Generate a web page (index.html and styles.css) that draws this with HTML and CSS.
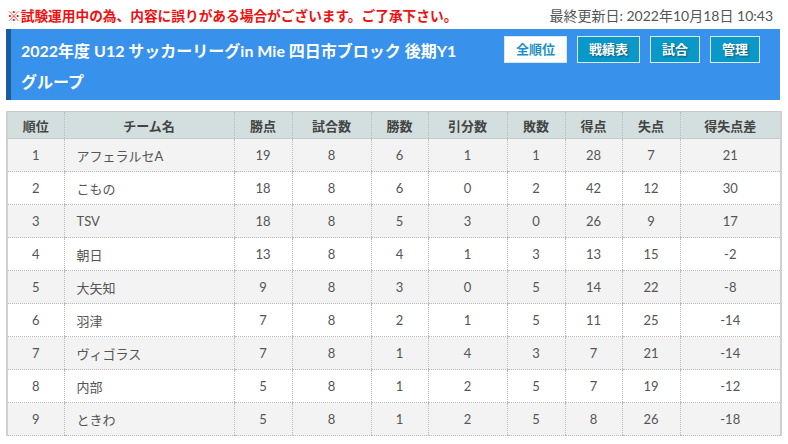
FILE: index.html
```html
<!DOCTYPE html>
<html lang="ja">
<head>
  <meta charset="UTF-8">
  <meta name="viewport" content="width=device-width, initial-scale=1.0">
  <title>順位表</title>
  <link rel="stylesheet" href="styles.css">
</head>
<body>
  <div class="page">
    <div class="topline">
      <span class="notice">※試験運用中の為、内容に誤りがある場合がございます。ご了承下さい。</span>
      <span class="updated">最終更新日: 2022年10月18日 10:43</span>
    </div>

    <div class="league-head">
      <h2 class="league-title">2022年度 U12 サッカーリーグin Mie 四日市ブロック 後期Y1<span class="nowrap">グループ</span></h2>
      <div class="menu">
        <a class="menu-btn active" href="#">全順位</a>
        <a class="menu-btn" href="#">戦績表</a>
        <a class="menu-btn" href="#">試合</a>
        <a class="menu-btn" href="#">管理</a>
      </div>
    </div>

    <table class="standings">
      <colgroup>
        <col style="width:57px">
        <col style="width:170px">
        <col style="width:58px">
        <col style="width:79px">
        <col style="width:57px">
        <col style="width:79px">
        <col style="width:58px">
        <col style="width:57px">
        <col style="width:58px">
        <col style="width:101px">
      </colgroup>
      <tr><th>順位</th><th>チーム名</th><th>勝点</th><th>試合数</th><th>勝数</th><th>引分数</th><th>敗数</th><th>得点</th><th>失点</th><th>得失点差</th></tr>
      <tr><td>1</td><td class="team">アフェラルセA</td><td>19</td><td>8</td><td>6</td><td>1</td><td>1</td><td>28</td><td>7</td><td>21</td></tr>
      <tr><td>2</td><td class="team">こもの</td><td>18</td><td>8</td><td>6</td><td>0</td><td>2</td><td>42</td><td>12</td><td>30</td></tr>
      <tr><td>3</td><td class="team">TSV</td><td>18</td><td>8</td><td>5</td><td>3</td><td>0</td><td>26</td><td>9</td><td>17</td></tr>
      <tr><td>4</td><td class="team">朝日</td><td>13</td><td>8</td><td>4</td><td>1</td><td>3</td><td>13</td><td>15</td><td>-2</td></tr>
      <tr><td>5</td><td class="team">大矢知</td><td>9</td><td>8</td><td>3</td><td>0</td><td>5</td><td>14</td><td>22</td><td>-8</td></tr>
      <tr><td>6</td><td class="team">羽津</td><td>7</td><td>8</td><td>2</td><td>1</td><td>5</td><td>11</td><td>25</td><td>-14</td></tr>
      <tr><td>7</td><td class="team">ヴィゴラス</td><td>7</td><td>8</td><td>1</td><td>4</td><td>3</td><td>7</td><td>21</td><td>-14</td></tr>
      <tr><td>8</td><td class="team">内部</td><td>5</td><td>8</td><td>1</td><td>2</td><td>5</td><td>7</td><td>19</td><td>-12</td></tr>
      <tr><td>9</td><td class="team">ときわ</td><td>5</td><td>8</td><td>1</td><td>2</td><td>5</td><td>8</td><td>26</td><td>-18</td></tr>
    </table>
  </div>
</body>
</html>
```

FILE: styles.css
```css
body {
  margin: 0;
  padding: 0;
  background-color: white;
  font-family: Lato, "Noto Sans CJK JP", sans-serif;
  color: #555;
}
.page {
  margin: 0 8px 0 6px;
}
.topline {
  display: flex;
  justify-content: space-between;
  align-items: center;
  height: 29px;
  padding: 0 7px 0 1px;
}
.notice {
  color: #ee1111;
  font-weight: bold;
  font-size: 13.7px;
}
.updated {
  color: #555;
  font-size: 14px;
}
.league-head {
  display: flex;
  align-items: flex-start;
  background-color: #3892eb;
  border-left: 5px solid #1b5c9e;
  padding: 4px 20px 3px 10px;
}
.league-title {
  flex: 1;
  margin: 0;
  color: white;
  font-size: 16px;
  font-weight: bold;
  line-height: 31px;
  padding-top: 2px;
}
.nowrap {
  white-space: nowrap;
}
.menu {
  display: flex;
  gap: 10px;
  padding-top: 3px;
}
.menu-btn {
  display: block;
  height: 25px;
  line-height: 25px;
  padding: 0 11px;
  border: 1px solid #dde8ee;
  background-color: #0a98c8;
  color: white;
  font-size: 13px;
  font-weight: bold;
  text-decoration: none;
  text-shadow: 1px 1px 2px rgba(0, 0, 0, 0.45);
}
.menu-btn.active {
  background-color: white;
  color: #1a90c4;
  text-shadow: none;
}
.standings {
  width: 774px;
  margin-top: 11px;
  table-layout: fixed;
  border-collapse: collapse;
  font-size: 13px;
  border-top: 1px solid #c8c8c8;
  border-left: 2px solid #d0d0d0;
  border-right: 2px solid #d0d0d0;
}
.standings th {
  height: 26px;
  background-color: #d3dfdf;
  color: #444;
  font-weight: bold;
  border-left: 1px dotted #bbb;
  border-bottom: 1px solid #c8c8c8;
  padding: 0;
}
.standings td {
  height: 32px;
  text-align: center;
  border-left: 1px dotted #bbb;
  border-bottom: 1px dotted #bbb;
  padding: 0;
}
.standings td.team {
  text-align: left;
  padding-left: 12px;
}
.standings tr:nth-child(even) td {
  background-color: #f3f3f3;
}
```
